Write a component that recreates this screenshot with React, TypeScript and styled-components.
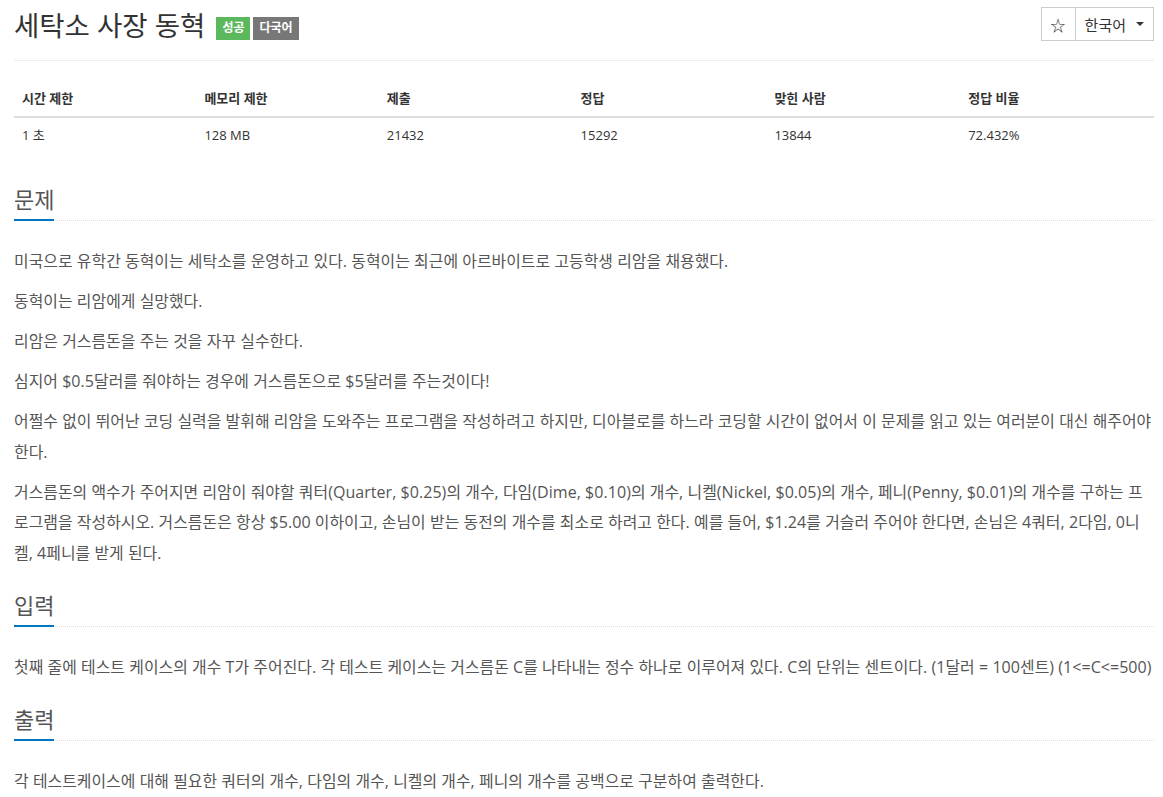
import React from 'react';
import styled, { createGlobalStyle } from 'styled-components';

const GlobalStyle = createGlobalStyle`
  html, body {
    margin: 0;
    padding: 0;
    background: #fff;
  }
  body {
    font-family: "Open Sans", "Noto Sans CJK KR", sans-serif;
    font-size: 14px;
    color: #555;
  }
`;

const stats = [
  { label: '시간 제한', value: '1 초', width: '16%' },
  { label: '메모리 제한', value: '128 MB', width: '16%' },
  { label: '제출', value: '21432', width: '17%' },
  { label: '정답', value: '15292', width: '17%' },
  { label: '맞힌 사람', value: '13844', width: '17%' },
  { label: '정답 비율', value: '72.432%', width: '17%' },
];

const sections = [
  {
    title: '문제',
    paragraphs: [
      '미국으로 유학간 동혁이는 세탁소를 운영하고 있다. 동혁이는 최근에 아르바이트로 고등학생 리암을 채용했다.',
      '동혁이는 리암에게 실망했다.',
      '리암은 거스름돈을 주는 것을 자꾸 실수한다.',
      '심지어 $0.5달러를 줘야하는 경우에 거스름돈으로 $5달러를 주는것이다!',
      '어쩔수 없이 뛰어난 코딩 실력을 발휘해 리암을 도와주는 프로그램을 작성하려고 하지만, 디아블로를 하느라 코딩할 시간이 없어서 이 문제를 읽고 있는 여러분이 대신 해주어야 한다.',
      '거스름돈의 액수가 주어지면 리암이 줘야할 쿼터(Quarter, $0.25)의 개수, 다임(Dime, $0.10)의 개수, 니켈(Nickel, $0.05)의 개수, 페니(Penny, $0.01)의 개수를 구하는 프로그램을 작성하시오. 거스름돈은 항상 $5.00 이하이고, 손님이 받는 동전의 개수를 최소로 하려고 한다. 예를 들어, $1.24를 거슬러 주어야 한다면, 손님은 4쿼터, 2다임, 0니켈, 4페니를 받게 된다.',
    ],
  },
  {
    title: '입력',
    paragraphs: [
      '첫째 줄에 테스트 케이스의 개수 T가 주어진다. 각 테스트 케이스는 거스름돈 C를 나타내는 정수 하나로 이루어져 있다. C의 단위는 센트이다. (1달러 = 100센트) (1<=C<=500)',
    ],
  },
  {
    title: '출력',
    paragraphs: [
      '각 테스트케이스에 대해 필요한 쿼터의 개수, 다임의 개수, 니켈의 개수, 페니의 개수를 공백으로 구분하여 출력한다.',
    ],
  },
];

// 한글 구간만 따로 감싸서 글자 폭을 원본에 맞춘다
const renderText = (text: string) =>
  text.split(/([\uAC00-\uD7A3]+)/).map((part, i) =>
    /[\uAC00-\uD7A3]/.test(part) ? <Ko key={i}>{part}</Ko> : part
  );

const App = () => {
  return (
    <>
      <GlobalStyle />
      <Page>
        <PageHeader>
          <Title>
            세탁소 사장 동혁
            <Badge tone="success">성공</Badge>
            <Badge tone="default">다국어</Badge>
          </Title>
          <ButtonGroup>
            <GroupButton>☆</GroupButton>
            <GroupButton>
              한국어 <Caret />
            </GroupButton>
          </ButtonGroup>
        </PageHeader>

        <StatTable>
          <thead>
            <tr>
              {stats.map((s) => (
                <th key={s.label} style={{ width: s.width }}>{s.label}</th>
              ))}
            </tr>
          </thead>
          <tbody>
            <tr>
              {stats.map((s) => (
                <td key={s.label}>{s.value}</td>
              ))}
            </tr>
          </tbody>
        </StatTable>

        {sections.map((section) => (
          <Section key={section.title}>
            <Headline>
              <h2>{section.title}</h2>
            </Headline>
            <ProblemText>
              {section.paragraphs.map((p, i) => (
                <p key={i}>{renderText(p)}</p>
              ))}
            </ProblemText>
          </Section>
        ))}
      </Page>
    </>
  );
};

const Page = styled.div`
  padding: 0 9px 0 14px;
`;

const PageHeader = styled.div`
  display: flex;
  justify-content: space-between;
  align-items: flex-start;
  padding-top: 7px;
  height: 53px;
  border-bottom: 1px solid #eee;
`;

const Title = styled.h1`
  display: flex;
  align-items: center;
  margin: 0;
  padding-top: 3px;
  font-size: 27.5px;
  font-weight: 400;
  line-height: 32px;
  color: #333;
`;

const Badge = styled.span<{ tone: 'success' | 'default' }>`
  display: inline-flex;
  align-items: center;
  height: 23px;
  padding: 0 6px;
  margin-left: ${({ tone }) => (tone === 'success' ? '11px' : '3px')};
  margin-top: 4px;
  font-size: 12px;
  font-weight: 700;
  color: #fff;
  background: ${({ tone }) => (tone === 'success' ? '#5cb85c' : '#777')};
`;

const ButtonGroup = styled.div`
  display: flex;
`;

const GroupButton = styled.button`
  display: flex;
  align-items: center;
  justify-content: center;
  gap: 10px;
  height: 34px;
  padding: 0 9px;
  font-family: "Open Sans", "Noto Sans CJK KR", sans-serif;
  font-size: 15px;
  color: #333;
  background: #fff;
  border: 1px solid #ccc;
  cursor: pointer;

  & + & {
    margin-left: -1px;
  }
`;

const Caret = styled.span`
  display: inline-block;
  width: 0;
  height: 0;
  border-top: 4px solid #333;
  border-left: 4px solid transparent;
  border-right: 4px solid transparent;
`;

const StatTable = styled.table`
  width: 100%;
  margin: 20px 0;
  border-collapse: collapse;
  font-size: 13px;
  color: #333;

  th, td {
    text-align: left;
    padding: 8px;
    line-height: 18.6px;
  }

  th {
    font-weight: 700;
    border-bottom: 2px solid #ddd;
  }
`;

const Section = styled.section``;

const Headline = styled.div`
  border-bottom: 1px dotted #ddd;

  h2 {
    display: inline-block;
    margin: 0 0 -1px;
    padding: 15px 0 8px;
    font-size: 22px;
    font-weight: 400;
    line-height: 24px;
    color: #555;
    border-bottom: 2px solid #0076c0;
  }
`;

const ProblemText = styled.div`
  padding-top: 25px;

  p {
    margin: 0 0 9.5px;
    font-size: 16px;
    line-height: 30.5px;
    letter-spacing: 0.05px;
    color: #555;
  }
`;

const Ko = styled.span`
  font-size: 15.9px;
  letter-spacing: 0.03px;
`;

export default App;
